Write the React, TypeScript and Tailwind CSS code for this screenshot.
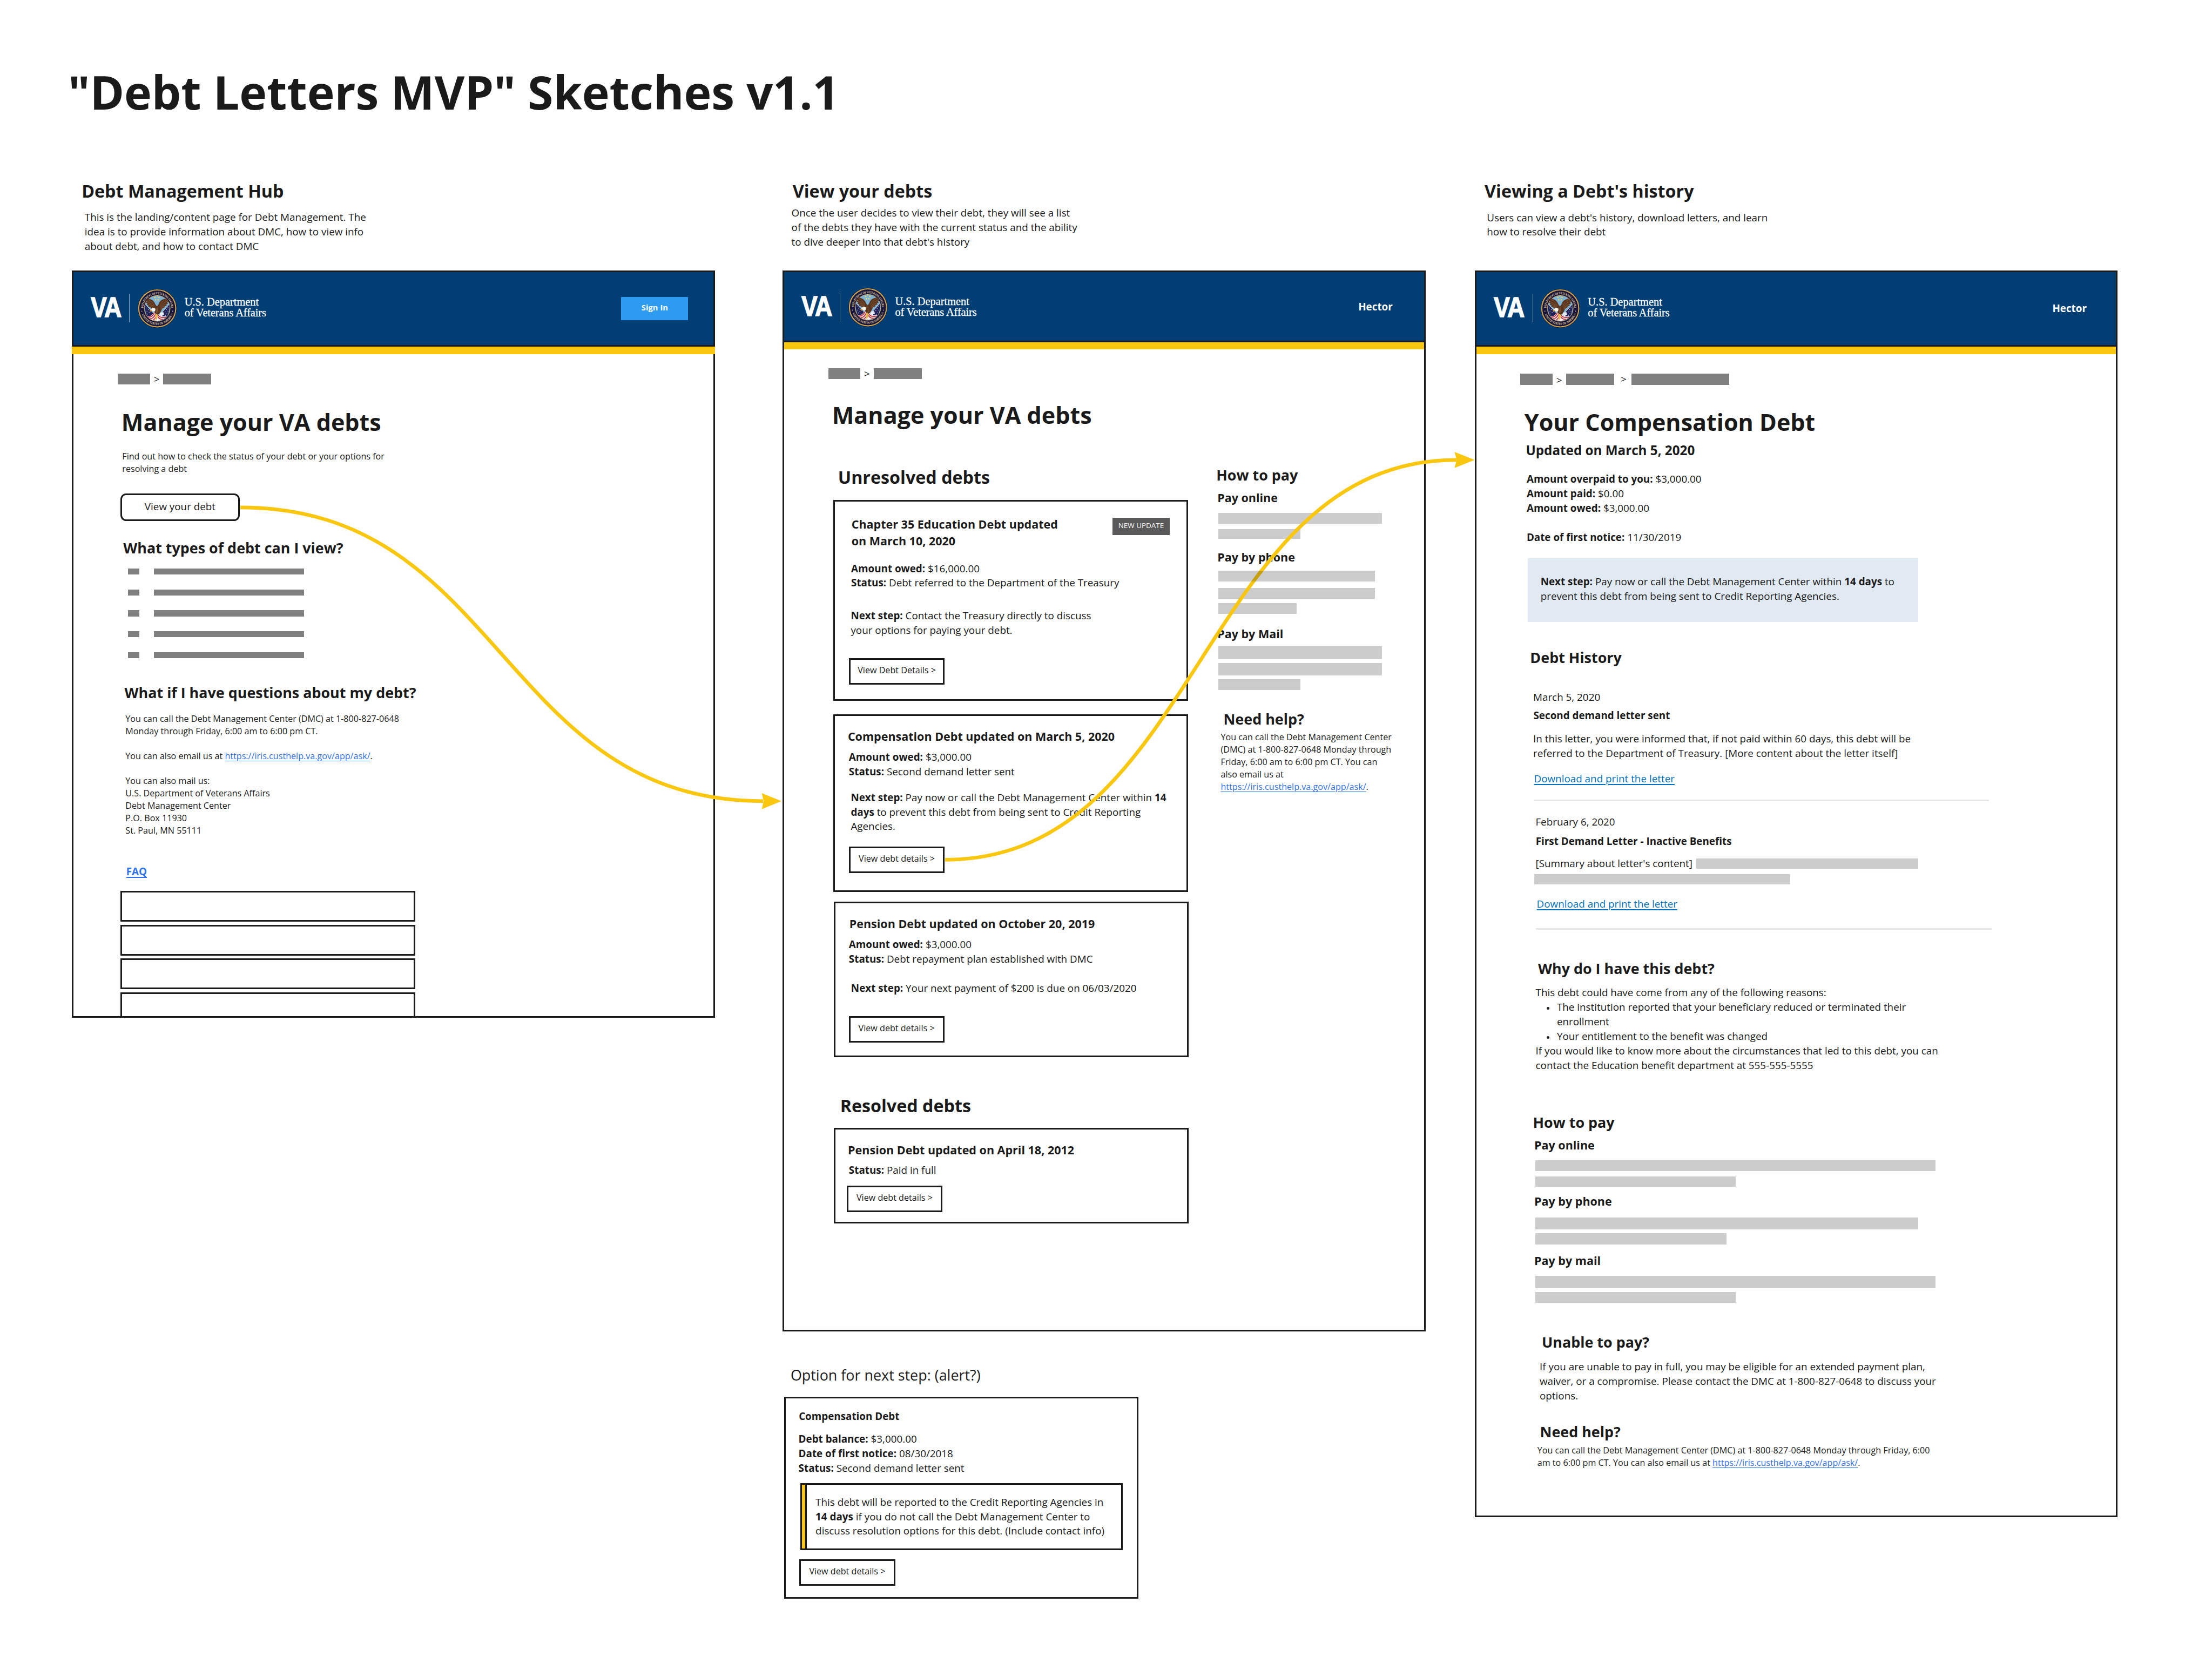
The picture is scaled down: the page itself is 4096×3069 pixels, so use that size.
import type { ReactNode } from "react";

type BoxProps = { className?: string; children?: ReactNode };

/* Text styles of the board: one component per font size. */
const Tiny = ({ className = "", children }: BoxProps) => (
  <p className={`text-[18.2px] leading-[25.95px] ${className}`}>{children}</p>
);
const Body = ({ className = "", children }: BoxProps) => (
  <p className={`text-[21.24px] leading-[30.35px] ${className}`}>{children}</p>
);
const H5 = ({ className = "", children }: BoxProps) => (
  <h5 className={`text-[24.28px] leading-[35px] font-bold ${className}`}>{children}</h5>
);
const H4 = ({ className = "", children }: BoxProps) => (
  <h4 className={`text-[27.32px] leading-[39px] font-bold ${className}`}>{children}</h4>
);
const H3 = ({ className = "", children }: BoxProps) => (
  <h3 className={`text-[30.35px] leading-[44px] font-bold ${className}`}>{children}</h3>
);
const H2 = ({ className = "", children }: BoxProps) => (
  <h2 className={`text-[36.42px] leading-[52px] font-bold ${className}`}>{children}</h2>
);
const H1 = ({ className = "", children }: BoxProps) => (
  <h1 className={`text-[48.56px] leading-[70px] font-bold ${className}`}>{children}</h1>
);

const Bar = ({ className = "" }: BoxProps) => <div className={`shrink-0 bg-[#cccccc] ${className}`} />;
const Crumb = ({ className = "" }: BoxProps) => <div className={`h-full bg-[#808080] ${className}`} />;

const AskLink = () => (
  <a className="text-[#2f72ee] underline decoration-[1.5px] underline-offset-[3px]">https://iris.custhelp.va.gov/app/ask/</a>
);

const Seal = () => (
  <svg viewBox="0 0 245 245" className="h-[81.6px] w-[81.6px] shrink-0">
    <defs>
      <path id="seal-top" d="M 35.6 136 A 88 88 0 1 1 209.4 136" />
      <path id="seal-bottom" d="M 21 146 A 104.5 104.5 0 0 0 224 146" />
      <clipPath id="seal-disc">
        <circle cx="122.5" cy="122.5" r="80" />
      </clipPath>
    </defs>
    <circle cx="122.5" cy="122.5" r="122" fill="#1c1a2c" />
    <circle cx="122.5" cy="122.5" r="116" fill="none" stroke="#dcb15f" strokeWidth="7" />
    <circle cx="122.5" cy="122.5" r="116" fill="none" stroke="#8f6a2c" strokeWidth="2" strokeDasharray="3 3" />
    <circle cx="122.5" cy="122.5" r="111" fill="#17153c" />
    <circle cx="122.5" cy="122.5" r="81" fill="#7fb3d5" stroke="#c79b4e" strokeWidth="3" />
    <g fill="#e3cf96" fontFamily="Liberation Serif, serif" fontWeight="700" fontSize="20">
      <text>
        <textPath href="#seal-top" textLength="272" startOffset="16" lengthAdjust="spacingAndGlyphs">DEPARTMENT OF VETERANS AFFAIRS</textPath>
      </text>
      <text>
        <textPath href="#seal-bottom" textLength="252" startOffset="15" lengthAdjust="spacingAndGlyphs">UNITED STATES OF AMERICA</textPath>
      </text>
    </g>
    <circle cx="26" cy="140" r="3" fill="#e3cf96" />
    <circle cx="219" cy="140" r="3" fill="#e3cf96" />
    <g clipPath="url(#seal-disc)">
      <path d="M44 94 L120 178 L120 205 L64 178 Q44 150 44 94Z" fill="#232459" />
      <path d="M201 94 L128 178 L128 205 L182 178 Q200 150 201 94Z" fill="#232459" />
      <path d="M44 94 L120 172 M201 94 L128 172" stroke="#e8e2d0" strokeWidth="2.5" fill="none" />
      <g fill="#dfe6f2">
        <circle cx="55" cy="120" r="2.2" /><circle cx="66" cy="130" r="2.2" /><circle cx="58" cy="140" r="2.2" />
        <circle cx="72" cy="148" r="2.2" /><circle cx="62" cy="158" r="2.2" /><circle cx="190" cy="118" r="2.2" />
        <circle cx="180" cy="130" r="2.2" /><circle cx="190" cy="140" r="2.2" /><circle cx="172" cy="144" r="2.2" />
        <circle cx="183" cy="156" r="2.2" /><circle cx="164" cy="160" r="2.2" /><circle cx="174" cy="168" r="2.2" />
      </g>
      <path d="M58 172 Q84 178 100 148 L128 150 Q140 180 184 170 Q160 196 124 202 Q84 198 58 172Z" fill="#f1ecec" />
      <g stroke="#c02336" strokeWidth="5.5" fill="none">
        <path d="M64 178 Q90 180 104 150" />
        <path d="M78 188 Q100 186 113 156" />
        <path d="M96 196 Q112 188 119 162" />
        <path d="M128 164 Q140 186 176 178" />
        <path d="M126 174 Q136 194 158 190" />
      </g>
      <path d="M140 150 L160 146 L166 158 L150 172 L138 164Z" fill="#e6ecf6" />
    </g>
    <path
      d="M58 58 L78 64 Q96 70 104 84 L112 100 L121 110 L130 98 L136 84 Q146 68 164 64 L186 58 L180 68 L192 68 L184 77 L194 80 L184 87 L190 93 L179 97 L182 105 L170 108 L168 117 L154 124 L144 144 L134 158 L120 166 L106 148 L102 132 L90 126 L78 116 L66 112 L68 105 L56 99 L62 93 L51 86 L59 80 L48 70 L60 69Z"
      fill="#59351f"
    />
    <path
      d="M66 68 Q90 78 104 108 M60 80 Q84 88 102 116 M66 94 Q84 98 100 122 M74 106 Q88 110 102 128 M178 66 Q154 74 138 108 M184 80 Q158 86 142 116 M180 94 Q160 98 144 124 M172 106 Q158 108 146 130 M122 116 L126 152 M114 120 L118 150"
      stroke="#91613a"
      strokeWidth="2.6"
      fill="none"
    />
    <path d="M84 128 Q94 112 110 124 Q114 134 104 144 L90 138 L80 142Z" fill="#f8f6f0" />
    <path d="M86 130 L74 136 L80 143 L90 138Z" fill="#e0a93c" />
    <path d="M110 160 L120 156 L126 166 L122 184 L116 198 L110 184Z" fill="#e6b94a" />
    <g fill="#ecd65c">
      <circle cx="121" cy="44" r="4.5" /><circle cx="108" cy="54" r="4.5" /><circle cx="134" cy="54" r="4.5" />
      <circle cx="113" cy="69" r="4.5" /><circle cx="129" cy="69" r="4.5" />
    </g>
  </svg>
);

const Logo = ({ className = "" }: BoxProps) => (
  <div className={`flex items-start text-white ${className}`}>
    <div className="mt-[19.4px] w-[65px] origin-left scale-x-[0.88] font-['Liberation_Sans',Arial,sans-serif] text-[57.4px] leading-[40px] font-bold tracking-[-2px] [-webkit-text-stroke:1.6px_white]">
      VA
    </div>
    <div className="mt-[11px] ml-[15.2px] h-[59.4px] w-[1.4px] bg-[#8ba6c0]" />
    <div className="ml-[16.6px]">
      <Seal />
    </div>
    <div className="mt-[17.8px] ml-[16.4px] font-['Liberation_Serif',serif] text-[23px] leading-[22.3px] [-webkit-text-stroke:0.3px_white]">
      U.S. Department
      <br />
      <span className="tracking-[-0.12px]">of Veterans Affairs</span>
    </div>
  </div>
);

const DetailsButton = ({ className = "", children }: BoxProps) => (
  <div
    className={`flex h-[55.4px] w-[199.9px] items-center justify-center border-[3.4px] border-[#1a1a1a] bg-white pb-[4px] text-[18.2px] leading-[26px] ${className}`}
  >
    {children}
  </div>
);

const Card = ({ className = "", children }: BoxProps) => (
  <div className={`flex flex-col border-[3.4px] border-[#1a1a1a] bg-white ${className}`}>{children}</div>
);

function HubColumn() {
  return (
    <div className="ml-[149.9px] flex w-[1343px] shrink-0 flex-col">
      <H2 className="mt-[110px] ml-[20.6px]">Debt Management Hub</H2>
      <Body className="mt-[14.6px] ml-[27px]">
        This is the landing/content page for Debt Management. The
        <br />
        idea is to provide information about DMC, how to view info
        <br />
        about debt, and how to contact DMC
      </Body>

      <div className="mt-[35.6px] flex h-[1560.7px] flex-col border-[3.4px] border-[#1a1a1a] bg-white">
        <div className="flex h-[155.3px] shrink-0 items-start justify-between border-b-[3.4px] border-[#1a1a1a] bg-[#003e73] pr-[52px] pl-[36px]">
          <Logo className="mt-[34.4px]" />
          <div className="mt-[51.3px] flex h-[49px] w-[140px] items-center justify-center bg-[#2d9bf0] pb-[3px] text-[16.7px] leading-[24px] font-bold text-white">
            Sign In
          </div>
        </div>
        <div className="mx-[-3.4px] h-[15.5px] shrink-0 bg-[#fac710]" />

        <div className="mt-[41.2px] ml-[92.5px] flex h-[23px] items-center text-[21.24px]">
          <Crumb className="w-[67.4px]" />
          <span className="w-[28px] text-center">&gt;</span>
          <Crumb className="w-[99.5px]" />
        </div>
        <H1 className="mt-[43.4px] ml-[100.3px]">Manage your VA debts</H1>
        <Tiny className="mt-[24.3px] ml-[102px]">
          Find out how to check the status of your debt or your options for
          <br />
          resolving a debt
        </Tiny>
        <div className="mt-[38px] ml-[98.1px] flex h-[57.3px] w-[249.5px] items-center justify-center rounded-[12px] border-[3.4px] border-[#1a1a1a] pb-[4px] text-[21.24px] leading-[30px]">
          View your debt
        </div>

        <H3 className="mt-[33.5px] ml-[104.2px]">What types of debt can I view?</H3>
        <ul className="mt-[21.8px] ml-[114.4px] flex flex-col gap-[31.2px]">
          {[0, 1, 2, 3, 4].map((row) => (
            <li key={row} className="flex h-[12.5px] gap-[31.1px]">
              <Crumb className="w-[23px]" />
              <Crumb className="w-[312.8px]" />
            </li>
          ))}
        </ul>

        <H3 className="mt-[49.5px] ml-[106.8px]">What if I have questions about my debt?</H3>
        <Tiny className="mt-[20.2px] ml-[108.8px]">
          You can call the Debt Management Center (DMC) at 1-800-827-0648
          <br />
          Monday through Friday, 6:00 am to 6:00 pm CT.
          <br />
          <br />
          You can also email us at <AskLink />.
          <br />
          <br />
          You can also mail us:
          <br />
          U.S. Department of Veterans Affairs
          <br />
          Debt Management Center
          <br />
          P.O. Box 11930
          <br />
          St. Paul, MN 55111
        </Tiny>
        <Body className="mt-[57.6px] ml-[110.4px] font-bold text-[#2f72ee] underline decoration-[2px] underline-offset-[3px]">FAQ</Body>
        <div className="mt-[25.6px] ml-[98.1px] flex w-[616.4px] flex-1 flex-col gap-[6.6px]">
          <div className="h-[63.9px] shrink-0 border-[3.4px] border-[#1a1a1a]" />
          <div className="h-[63.9px] shrink-0 border-[3.4px] border-[#1a1a1a]" />
          <div className="h-[63.9px] shrink-0 border-[3.4px] border-[#1a1a1a]" />
          <div className="flex-1 border-[3.4px] border-b-0 border-[#1a1a1a]" />
        </div>
      </div>
    </div>
  );
}

function DebtsColumn() {
  return (
    <div className="ml-[141.4px] flex w-[1343px] shrink-0 flex-col">
      <H2 className="mt-[110px] ml-[21.3px]">View your debts</H2>
      <Body className="mt-[6px] ml-[18.8px]">
        Once the user decides to view their debt, they will see a list
        <br />
        of the debts they have with the current status and the ability
        <br />
        to dive deeper into that debt's history
      </Body>

      <div className="mt-[44.3px] flex h-[2216.1px] shrink-0 flex-col border-[3.4px] border-[#1a1a1a] bg-white">
        <div className="flex h-[146.6px] shrink-0 items-start justify-between border-b-[3.4px] border-[#1a1a1a] bg-[#003e73] pr-[65.2px] pl-[35.7px]">
          <Logo className="mt-[32.6px]" />
          <Body className="mt-[57px] font-bold text-white">Hector</Body>
        </div>
        <div className="h-[14.7px] shrink-0 bg-[#fac710]" />

        <div className="mt-[39px] ml-[92.5px] flex h-[22.8px] items-center text-[21.24px]">
          <Crumb className="w-[66.6px]" />
          <span className="w-[28.1px] text-center">&gt;</span>
          <Crumb className="w-[100.5px]" />
        </div>
        <H1 className="mt-[40.7px] ml-[100.2px]">Manage your VA debts</H1>

        <div className="flex">
          <div className="flex w-[844.5px] flex-col">
            <H2 className="mt-[67.4px] ml-[112.6px]">Unresolved debts</H2>

            <Card className="mt-[22.2px] ml-[103.2px] h-[419.6px] w-[740.3px]">
              <div className="flex items-start justify-between pr-[34.3px] pl-[34.2px]">
                <H5 className="mt-[30.1px]">
                  Chapter 35 Education Debt updated
                  <br />
                  on March 10, 2020
                </H5>
                <div className="mt-[34.5px] flex h-[36.2px] w-[120.5px] items-center justify-center bg-[#595959] pb-[3px] text-[15.17px] leading-[22px] text-white">
                  NEW UPDATE
                </div>
              </div>
              <Body className="mt-[25px] ml-[33.4px]">
                <b>Amount owed:</b> $16,000.00
                <br />
                <b>Status:</b> Debt referred to the Department of the Treasury
              </Body>
              <Body className="mt-[38.1px] ml-[32.7px]">
                <b>Next step:</b> Contact the Treasury directly to discuss
                <br />
                your options for paying your debt.
              </Body>
              <DetailsButton className="mt-[42.8px] ml-[28.8px]">View Debt Details &gt;</DetailsButton>
            </Card>

            <Card className="mt-[29.1px] ml-[103.2px] h-[370.8px] w-[740.3px]">
              <H5 className="mt-[24.5px] ml-[26.5px]">Compensation Debt updated on March 5, 2020</H5>
              <Body className="mt-[10.9px] ml-[28.7px]">
                <b>Amount owed:</b> $3,000.00
                <br />
                <b>Status:</b> Second demand letter sent
              </Body>
              <Body className="mt-[23.7px] ml-[32.7px]">
                <b>Next step:</b> Pay now or call the Debt Management Center within <b>14</b>
                <br />
                <b>days</b> to prevent this debt from being sent to Credit Reporting
                <br />
                Agencies.
              </Body>
              <DetailsButton className="mt-[26.1px] ml-[28.8px]">View debt details &gt;</DetailsButton>
            </Card>

            <Card className="mt-[20.3px] ml-[104.2px] h-[324.6px] w-[740.3px]">
              <H5 className="mt-[25.2px] ml-[28.7px]">Pension Debt updated on October 20, 2019</H5>
              <Body className="mt-[10.7px] ml-[27.7px]">
                <b>Amount owed:</b> $3,000.00
                <br />
                <b>Status:</b> Debt repayment plan established with DMC
              </Body>
              <Body className="mt-[30.3px] ml-[32.2px]">
                <b>Next step:</b> Your next payment of $200 is due on 06/03/2020
              </Body>
              <DetailsButton className="mt-[43.2px] ml-[27.3px]">View debt details &gt;</DetailsButton>
            </Card>

            <H2 className="mt-[74.3px] ml-[117px]">Resolved debts</H2>
            <Card className="mt-[21.2px] ml-[104.2px] h-[200.2px] w-[740.3px]">
              <H5 className="mt-[25.2px] ml-[25.7px]">Pension Debt updated on April 18, 2012</H5>
              <Body className="mt-[10.3px] ml-[27.7px]">
                <b>Status:</b> Paid in full
              </Body>
              <DetailsButton className="mt-[16.5px] ml-[23.2px]">View debt details &gt;</DetailsButton>
            </Card>
          </div>

          <div className="ml-[57.8px] flex flex-col">
            <H3 className="mt-[67.3px] ml-[0.5px]">How to pay</H3>
            <H5 className="mt-[7.7px] ml-[2.6px]">Pay online</H5>
            <Bar className="mt-[14.9px] ml-[5px] h-[22.2px] w-[341.4px]" />
            <Bar className="mt-[11.4px] ml-[5px] h-[20.7px] w-[171px]" />
            <H5 className="mt-[20px] ml-[2.6px]">Pay by phone</H5>
            <div className="relative z-20 mt-[11.3px] ml-[5px] h-[23px] w-[326.6px] bg-black/20" />
            <Bar className="mt-[12.9px] ml-[5px] h-[22.8px] w-[326.6px]" />
            <Bar className="mt-[9.3px] ml-[5px] h-[22.9px] w-[162.9px]" />
            <H5 className="mt-[23.8px] ml-[2.6px]">Pay by Mail</H5>
            <Bar className="mt-[9px] ml-[5px] h-[26.3px] w-[341.4px]" />
            <Bar className="mt-[8.7px] ml-[5px] h-[25.7px] w-[341.4px]" />
            <Bar className="mt-[7.2px] ml-[5px] h-[22.8px] w-[171px]" />
            <H3 className="mt-[39.1px] ml-[15.4px]">Need help?</H3>
            <Tiny className="mt-[3.3px] ml-[9.7px]">
              You can call the Debt Management Center
              <br />
              (DMC) at 1-800-827-0648 Monday through
              <br />
              Friday, 6:00 am to 6:00 pm CT. You can
              <br />
              also email us at
              <br />
              <AskLink />.
            </Tiny>
          </div>
        </div>
      </div>

      <p className="mt-[68.8px] ml-[16.9px] text-[30.35px] leading-[44px]">Option for next step: (alert?)</p>
      <Card className="mt-[23.5px] ml-[3.5px] h-[422px] w-[740px] shrink-0">
        <Body className="mt-[22.9px] ml-[27.2px] font-bold">Compensation Debt</Body>
        <Body className="mt-[17.1px] ml-[26.6px]">
          <b>Debt balance:</b> $3,000.00
          <br />
          <b>Date of first notice:</b> 08/30/2018
          <br />
          <b>Status:</b> Second demand letter sent
        </Body>
        <div className="mt-[16.4px] ml-[30.1px] flex h-[139.7px] w-[673.6px] border-[3.4px] border-[#1a1a1a]">
          <div className="w-[10.2px] border-r-[3.4px] border-[#1a1a1a] bg-[#fac710]" />
          <Body className="mt-[20.6px] ml-[18.5px]">
            This debt will be reported to the Credit Reporting Agencies in
            <br />
            <b>14 days</b> if you do not call the Debt Management Center to
            <br />
            discuss resolution options for this debt. (Include contact info)
          </Body>
        </div>
        <DetailsButton className="mt-[18.8px] ml-[28.5px]">View debt details &gt;</DetailsButton>
      </Card>
    </div>
  );
}

function HistoryColumn() {
  return (
    <div className="ml-[102.8px] flex w-[1343px] shrink-0 flex-col">
      <H2 className="mt-[110px] ml-[20.7px]">Viewing a Debt's history</H2>
      <Body className="mt-[15.4px] ml-[25.5px]">
        Users can view a debt's history, download letters, and learn
        <br />
        how to resolve their debt
      </Body>

      <div className="mt-[65.3px] flex h-[2604px] shrink-0 flex-col border-[3.4px] border-[#1a1a1a] bg-white">
        <div className="flex h-[155.6px] shrink-0 items-start justify-between border-b-[3.4px] border-[#1a1a1a] bg-[#003e73] pr-[61.4px] pl-[36.9px]">
          <Logo className="mt-[34.3px]" />
          <Body className="mt-[60.5px] font-bold text-white">Hector</Body>
        </div>
        <div className="h-[15.3px] shrink-0 bg-[#fac710]" />

        <div className="mt-[41px] ml-[91.9px] flex h-[23.2px] items-center text-[21.24px]">
          <Crumb className="w-[67.1px]" />
          <span className="w-[28.2px] pt-[4px] text-center">&gt;</span>
          <Crumb className="w-[100.3px]" />
          <span className="w-[36.3px] pl-[4px] text-center">&gt;</span>
          <Crumb className="w-[204.3px]" />
        </div>
        <H1 className="mt-[43px] ml-[100.5px]">Your Compensation Debt</H1>
        <H4 className="mt-[4.5px] ml-[103.5px]">Updated on March 5, 2020</H4>
        <Body className="mt-[25.9px] ml-[105.1px]">
          <b>Amount overpaid to you:</b> $3,000.00
          <br />
          <b>Amount paid:</b> $0.00
          <br />
          <b>Amount owed:</b> $3,000.00
          <br />
          <br />
          <b>Date of first notice:</b> 11/30/2019
        </Body>
        <div className="mt-[28.9px] ml-[107.4px] h-[132.8px] w-[816px] bg-[#e1e9f3] pt-[33.7px] pl-[26.8px]">
          <Body>
            <b>Next step:</b> Pay now or call the Debt Management Center within <b>14 days</b> to
            <br />
            prevent this debt from being sent to Credit Reporting Agencies.
          </Body>
        </div>

        <H3 className="mt-[51.4px] ml-[112.4px]">Debt History</H3>
        <Body className="mt-[46px] ml-[118.8px]">March 5, 2020</Body>
        <Body className="mt-[8.8px] ml-[119.3px] font-bold">Second demand letter sent</Body>
        <Body className="mt-[17.4px] ml-[118.8px]">
          In this letter, you were informed that, if not paid within 60 days, this debt will be
          <br />
          referred to the Department of Treasury. [More content about the letter itself]
        </Body>
        <Body className="mt-[23.2px] ml-[120.5px] text-[#0071bc] underline decoration-[1.7px] underline-offset-[3px]">
          Download and print the letter
        </Body>
        <div className="mt-[28.4px] ml-[120.3px] h-[3px] w-[951px] shrink-0 bg-[#e6e6e6]" />

        <Body className="mt-[28.3px] ml-[123.7px]">February 6, 2020</Body>
        <Body className="mt-[10.1px] ml-[124px] font-bold">First Demand Letter - Inactive Benefits</Body>
        <div className="mt-[16.2px] ml-[123.8px] flex h-[30.4px]">
          <Body className="w-[335.4px]">[Summary about letter's content]</Body>
          <Bar className="mt-[4.4px] h-[21.5px] w-[464.3px]" />
        </div>
        <Bar className="mt-[7.1px] ml-[121.5px] h-[21.4px] w-[534px]" />
        <Body className="mt-[26.2px] ml-[126.2px] text-[#0071bc] underline decoration-[1.7px] underline-offset-[3px]">
          Download and print the letter
        </Body>
        <div className="mt-[35.1px] ml-[124.9px] h-[3px] w-[951.6px] shrink-0 bg-[#e6e6e6]" />

        <H3 className="mt-[58.9px] ml-[128.9px]">Why do I have this debt?</H3>
        <div className="mt-[13.6px] ml-[123.9px]">
          <Body>This debt could have come from any of the following reasons:</Body>
          <ul className="ml-[23.6px]">
            <li className="flex gap-[16px]">
              <span className="mt-[15px] h-[4.8px] w-[4.8px] rounded-full bg-[#1a1a1a]" />
              <Body>
                The institution reported that your beneficiary reduced or terminated their
                <br />
                enrollment
              </Body>
            </li>
            <li className="flex gap-[16px]">
              <span className="mt-[15px] h-[4.8px] w-[4.8px] rounded-full bg-[#1a1a1a]" />
              <Body>Your entitlement to the benefit was changed</Body>
            </li>
          </ul>
          <Body>
            If you would like to know more about the circumstances that led to this debt, you can
            <br />
            contact the Education benefit department at 555-555-5555
          </Body>
        </div>

        <H3 className="mt-[81.1px] ml-[118.2px]">How to pay</H3>
        <H5 className="mt-[8.6px] ml-[121px]">Pay online</H5>
        <Bar className="mt-[14.4px] ml-[122.9px] h-[22.5px] w-[836.4px]" />
        <Bar className="mt-[10.9px] ml-[122.9px] h-[21.8px] w-[418.6px]" />
        <H5 className="mt-[12.9px] ml-[121px]">Pay by phone</H5>
        <Bar className="mt-[16.9px] ml-[122.9px] h-[24px] w-[799.9px]" />
        <Bar className="mt-[8.2px] ml-[122.9px] h-[23.5px] w-[400px]" />
        <H5 className="mt-[16.3px] ml-[121px]">Pay by mail</H5>
        <Bar className="mt-[14px] ml-[122.9px] h-[26.6px] w-[836.4px]" />
        <Bar className="mt-[7.4px] ml-[122.9px] h-[22.4px] w-[418.6px]" />

        <H3 className="mt-[60.8px] ml-[136.8px]">Unable to pay?</H3>
        <Body className="mt-[13.8px] ml-[132.3px]">
          If you are unable to pay in full, you may be eligible for an extended payment plan,
          <br />
          waiver, or a compromise. Please contact the DMC at 1-800-827-0648 to discuss your
          <br />
          options.
        </Body>
        <H3 className="mt-[38.4px] ml-[132.9px]">Need help?</H3>
        <Tiny className="mt-[4.5px] ml-[127.5px]">
          You can call the Debt Management Center (DMC) at 1-800-827-0648 Monday through Friday, 6:00
          <br />
          am to 6:00 pm CT. You can also email us at <AskLink />.
        </Tiny>
      </div>
    </div>
  );
}

/* Arrows that lead from a button to the screen it opens. */
const Connectors = () => (
  <svg viewBox="0 0 4620 3462" className="pointer-events-none absolute top-0 left-0 z-10 h-[3462px] w-[4620px]">
    <g fill="none" stroke="#fac710" strokeWidth="7.6">
      <path d="M502 1060 C1048 1060 1048 1673.6 1594 1673.6" />
      <path d="M1974 1796 C2508 1796 2508 960.8 3042 960.8" />
    </g>
    <g fill="#fac710">
      <path d="M1632 1673.6 L1591 1656.8 L1595 1673.6 L1591 1690.4Z" />
      <path d="M3080 960.8 L3038 944 L3042.5 960.8 L3038 977.6Z" />
    </g>
  </svg>
);

export default function App() {
  return (
    <div className="h-[3069px] w-[4096px] overflow-hidden bg-white">
      <main className="relative h-[3462px] w-[4620px] bg-white font-['Open_Sans',sans-serif] whitespace-nowrap text-[#1a1a1a] [zoom:0.88658]">
        <div className="flex flex-col">
          <h1 className="mt-[122px] ml-[142px] text-[97.1px] leading-[140px] font-bold tracking-[-0.1px]">"Debt Letters MVP" Sketches v1.1</h1>
          <div className="flex items-start">
            <HubColumn />
            <DebtsColumn />
            <HistoryColumn />
          </div>
        </div>
        <Connectors />
      </main>
    </div>
  );
}
